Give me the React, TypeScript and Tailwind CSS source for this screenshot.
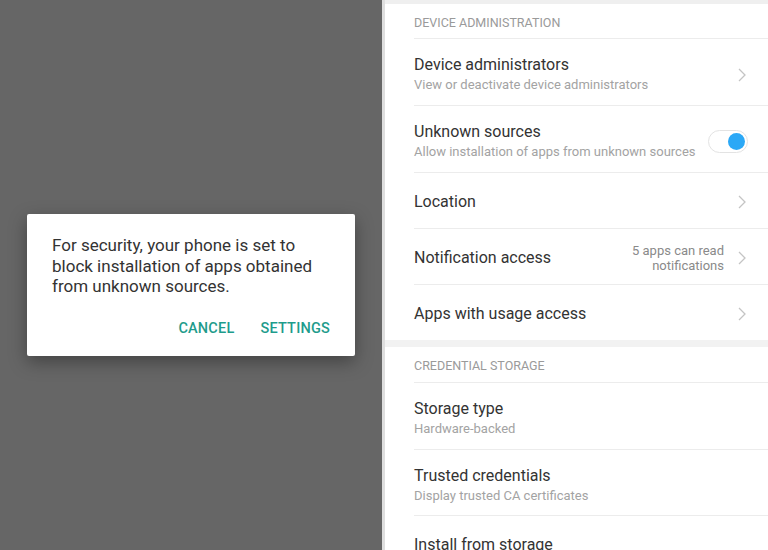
import React from 'react';

function Chevron() {
  return (
    <svg width="8" height="14" viewBox="0 0 8 14" className="shrink-0">
      <path d="M1 1l6 6-6 6" fill="none" stroke="#c4c4c4" strokeWidth="1.3" />
    </svg>
  );
}

function Toggle() {
  return (
    <div className="flex h-[23px] w-[40px] shrink-0 items-center justify-end rounded-full border border-[#e3e3e3] bg-white pr-[2px]">
      <div className="h-[17px] w-[17px] rounded-full bg-[#2ba8f6]" />
    </div>
  );
}

function Header({ label, h }: { label: string; h: string }) {
  return (
    <div className={`flex items-center border-b border-[#ececec] pt-[4px] text-[12.5px] text-[#9a9a9a] ${h}`}>
      {label}
    </div>
  );
}

function Row({
  title,
  subtitle,
  right,
  h,
  last,
}: {
  title: string;
  subtitle?: string;
  right?: React.ReactNode;
  h: string;
  last?: boolean;
}) {
  return (
    <div
      className={`flex items-center pr-[22px] ${subtitle ? 'pt-[5px]' : 'pt-[2px]'} ${h} ${
        last ? '' : 'border-b border-[#ececec]'
      }`}
    >
      <div className="flex flex-1 flex-col">
        <div className="text-[16px] leading-[20px] text-[#333333]">{title}</div>
        {subtitle && <div className="mt-[1px] text-[13px] leading-[18px] text-[#a3a3a3]">{subtitle}</div>}
      </div>
      {right}
    </div>
  );
}

export default function App() {
  return (
    <div className="flex h-[550px] w-[768px] overflow-hidden bg-white font-['Roboto',sans-serif]">
      <div className="h-full w-[382px] shrink-0 bg-[#666666] pl-[27px] pt-[214px]">
        <div className="h-[142px] w-[328px] rounded-[2px] bg-white px-[25px] pt-[21px] shadow-[0_6px_18px_rgba(0,0,0,0.35)]">
          <p className="text-[17px] leading-[20.5px] text-[#333333]">
            For security, your phone is set to block installation of apps obtained from unknown sources.
          </p>
          <div className="mt-[21px] flex justify-end gap-[26px] text-[14.5px] font-medium tracking-[0.2px] text-[#1f9c8c]">
            <span>CANCEL</span>
            <span>SETTINGS</span>
          </div>
        </div>
      </div>

      <div className="flex h-full flex-1 flex-col border-l-[3px] border-[#dedede]">
        <div className="h-[4px] shrink-0 bg-[#efefef]" />
        <div className="pl-[29px]">
          <Header label="DEVICE ADMINISTRATION" h="h-[35px]" />
          <Row
            title="Device administrators"
            subtitle="View or deactivate device administrators"
            h="h-[67px]"
            right={<Chevron />}
          />
          <Row
            title="Unknown sources"
            subtitle="Allow installation of apps from unknown sources"
            h="h-[67px]"
            right={
              <div className="-mr-[2px]">
                <Toggle />
              </div>
            }
          />
          <Row title="Location" h="h-[56px]" right={<Chevron />} />
          <Row
            title="Notification access"
            h="h-[56px]"
            right={
              <div className="flex items-center gap-[14px]">
                <div className="text-right text-[13px] leading-[15px] text-[#8a8a8a]">
                  5 apps can read
                  <br />
                  notifications
                </div>
                <Chevron />
              </div>
            }
          />
          <Row title="Apps with usage access" h="h-[55px]" right={<Chevron />} last />
        </div>
        <div className="h-[7px] shrink-0 bg-[#f2f2f2]" />
        <div className="pl-[29px]">
          <Header label="CREDENTIAL STORAGE" h="h-[36px]" />
          <Row title="Storage type" subtitle="Hardware-backed" h="h-[67px]" />
          <Row title="Trusted credentials" subtitle="Display trusted CA certificates" h="h-[66px]" />
          <Row title="Install from storage" h="h-[56px]" last />
        </div>
      </div>
    </div>
  );
}
